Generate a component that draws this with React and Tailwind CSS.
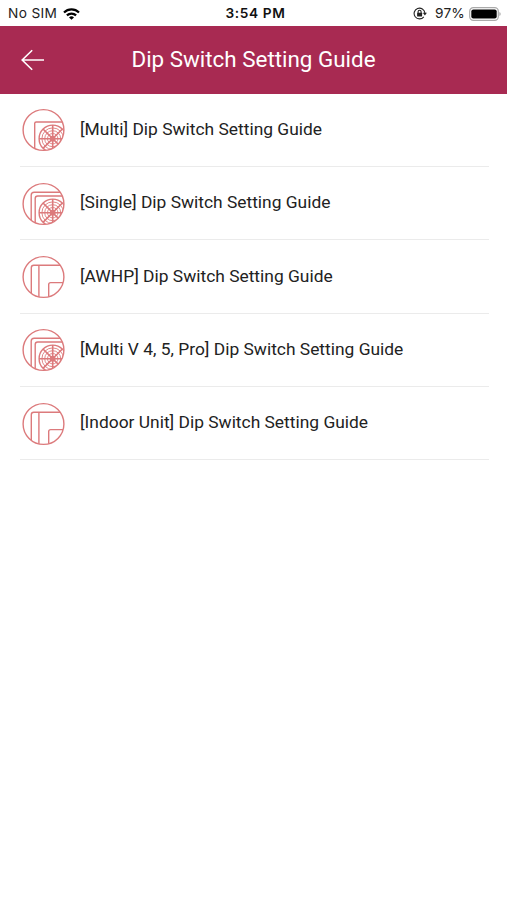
import { useId } from 'react';

const guides = [
  { id: 1, title: '[Multi] Dip Switch Setting Guide', icon: 'multi' },
  { id: 2, title: '[Single] Dip Switch Setting Guide', icon: 'single' },
  { id: 3, title: '[AWHP] Dip Switch Setting Guide', icon: 'indoor' },
  { id: 4, title: '[Multi V 4, 5, Pro] Dip Switch Setting Guide', icon: 'single' },
  { id: 5, title: '[Indoor Unit] Dip Switch Setting Guide', icon: 'indoor' },
];

const Fan = () => (
  <g>
    <circle cx="30.7" cy="30.7" r="13.6" />
    <circle cx="30.7" cy="30.7" r="10.8" strokeWidth="0.9" />
    <circle cx="30.7" cy="30.7" r="8" strokeWidth="0.9" />
    <circle cx="30.7" cy="30.7" r="5.2" strokeWidth="0.9" />
    <path d="M30.7 17v27M17 30.7h27M21 21l19.4 19.4M21 40.4L40.4 21" strokeWidth="1.6" />
    <circle cx="30.7" cy="30.7" r="2.2" fill="currentColor" />
  </g>
);

const UnitIcon = ({ type }) => {
  const clipId = useId();

  return (
    <svg viewBox="0 0 44 44" className="mt-px h-11 w-11 shrink-0 text-[#dc7a7c]" fill="none" stroke="currentColor" strokeWidth="1.4">
      <clipPath id={clipId}>
        <circle cx="21.5" cy="22" r="20.4" />
      </clipPath>
      <g clipPath={`url(#${clipId})`}>
        {type === 'multi' && <path d="M12.7 44V15.5q0-1.5 1.5-1.5H44" />}
        {type === 'single' && (
          <>
            <path d="M9.2 44V13.3q0-3 3-3H44" />
            <path d="M13.2 44V16.5q0-2.5 2.5-2.5H44" />
          </>
        )}
        {type === 'indoor' && (
          <>
            <path d="M9.3 44V12.7q0-2.5 2.5-2.5H44" />
            <path d="M16.9 10.2V44" />
            <path d="M26.7 44V29.6q0-2 2-2H44" />
          </>
        )}
        {type !== 'indoor' && <Fan />}
      </g>
      <circle cx="21.5" cy="22" r="20.4" />
    </svg>
  );
};

const StatusBar = () => (
  <div className="grid h-[25.5px] grid-cols-[1fr_62px_1fr] items-center pt-[2px] font-['Inter',sans-serif] text-[13.7px] leading-none whitespace-nowrap text-[#222]">
    <div className="flex items-center gap-[6px] pl-2">
      <span className="tracking-[0.35px]">No SIM</span>
      <svg viewBox="0 0 17 12" className="h-3 w-[17px] text-black" fill="none" stroke="currentColor" strokeWidth="2.2">
        <path d="M1 4.5a10.8 10.8 0 0 1 15 0" />
        <path d="M3.9 7.4a6.6 6.6 0 0 1 9.2 0" />
        <path d="M8.5 11.7L6 9.4a3.7 3.7 0 0 1 5 0z" fill="currentColor" stroke="none" />
      </svg>
    </div>
    <span className="pl-[3px] font-semibold tracking-[0.6px] text-[#111]">3:54 PM</span>
    <div className="flex items-center justify-end pr-[6px]">
      <svg viewBox="0 0 14 13" className="h-[13px] w-[14px] text-[#222]" fill="none" stroke="currentColor" strokeWidth="1.1">
        <path d="M10.8 9.8A5.4 5.4 0 1 1 11.9 6" />
        <path d="M9.8 5.8h4.1l-2 2.8z" fill="currentColor" stroke="none" />
        <rect x="4.1" y="5.7" width="5" height="3.7" rx="0.5" fill="currentColor" stroke="none" />
        <path d="M5.1 6V4.8a1.5 1.5 0 0 1 3 0V6" />
      </svg>
      <span className="ml-2 tracking-[0.2px]">97%</span>
      <svg viewBox="0 0 32 14" className="ml-1 h-[14px] w-8">
        <rect x="0.7" y="0.7" width="28.6" height="12.6" rx="3.6" fill="none" stroke="#aaa" strokeWidth="1.2" />
        <rect x="2.3" y="2.4" width="25.4" height="9.2" rx="2" fill="#000" />
        <path d="M30.4 5v4q1.3-.5 1.3-2t-1.3-2z" fill="#aaa" />
      </svg>
    </div>
  </div>
);

const App = () => {
  return (
    <div className="min-h-screen bg-white font-['Roboto',sans-serif]">
      <StatusBar />

      <header className="grid h-[68px] grid-cols-[72px_1fr_72px] items-center bg-[#a82a52] text-white">
        <button type="button" aria-label="Back" className="pl-[21px]">
          <svg viewBox="0 0 24 22" className="h-[22px] w-6" fill="none" stroke="currentColor" strokeWidth="1.6">
            <path d="M11.2 1.3L1.2 11l10 9.7M1.2 11H23" />
          </svg>
        </button>
        <h1 className="text-center text-[22.4px] leading-none whitespace-nowrap">Dip Switch Setting Guide</h1>
      </header>

      <ul className="pr-[18px] pl-5">
        {guides.map((guide) => (
          <li key={guide.id} className="flex h-[73.35px] items-center border-b border-[#ebebeb] pl-[2px]">
            <UnitIcon type={guide.icon} />
            <span className="ml-[14px] text-[17.4px] leading-none whitespace-nowrap text-[#222]">{guide.title}</span>
          </li>
        ))}
      </ul>
    </div>
  );
};

export default App;
